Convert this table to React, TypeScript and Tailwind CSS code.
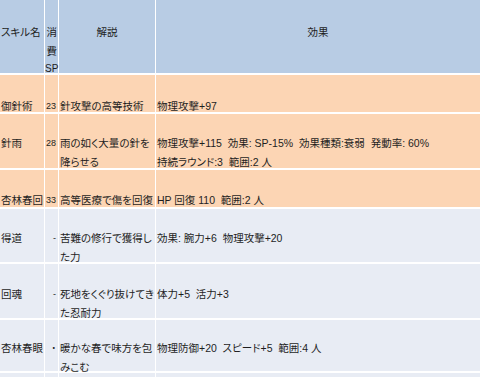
const font = { fontFamily: '"Liberation Sans", "Noto Sans CJK JP", sans-serif' };

type Row = {
  name: string;
  sp: string;
  desc: string[];
  effect: string[];
  tone: "orange" | "light";
  h: string;
  pt: string;
};

const rows: Row[] = [
  {
    name: "御針術",
    sp: "23",
    desc: ["針攻撃の高等技術"],
    effect: ["物理攻撃+97"],
    tone: "orange",
    h: "h-[37px]",
    pt: "pt-[22px]",
  },
  {
    name: "針雨",
    sp: "28",
    desc: ["雨の如く大量の針を", "降らせる"],
    effect: [
      "物理攻撃+115\u00a0\u00a0効果: SP-15%\u00a0\u00a0効果種類:衰弱\u00a0\u00a0発動率: 60%",
      "持続ラウンド:3\u00a0\u00a0範囲:2 人",
    ],
    tone: "orange",
    h: "h-[54px]",
    pt: "pt-[20px]",
  },
  {
    name: "杏林春回",
    sp: "33",
    desc: ["高等医療で傷を回復"],
    effect: ["HP 回復 110\u00a0\u00a0範囲:2 人"],
    tone: "orange",
    h: "h-[37px]",
    pt: "pt-[21px]",
  },
  {
    name: "得道",
    sp: "-",
    desc: ["苦難の修行で獲得し", "た力"],
    effect: ["効果: 腕力+6\u00a0\u00a0物理攻撃+20"],
    tone: "light",
    h: "h-[53px]",
    pt: "pt-[20px]",
  },
  {
    name: "回魂",
    sp: "-",
    desc: ["死地をくぐり抜けてき", "た忍耐力"],
    effect: ["体力+5\u00a0\u00a0活力+3"],
    tone: "light",
    h: "h-[54px]",
    pt: "pt-[21px]",
  },
  {
    name: "杏林春眼",
    sp: "・",
    desc: ["暖かな春で味方を包", "みこむ"],
    effect: ["物理防御+20\u00a0\u00a0スピード+5\u00a0\u00a0範囲:4 人"],
    tone: "light",
    h: "h-[51px]",
    pt: "pt-[19px]",
  },
];

function Cell({
  tone,
  className = "",
  children,
}: {
  tone: "orange" | "light" | "head";
  className?: string;
  children?: React.ReactNode;
}) {
  const bg =
    tone === "orange" ? "bg-[#fcd5b4]" : tone === "light" ? "bg-[#e8ecf4]" : "bg-[#b8cce4]";
  return <div className={`${bg} overflow-visible whitespace-nowrap ${className}`}>{children}</div>;
}

export default function App() {
  return (
    <div
      className="h-[377px] w-[480px] overflow-hidden bg-white text-[10.5px] leading-[19px] text-[#1e1e1e] [font-feature-settings:'palt']"
      style={font}
    >
      <div className="grid grid-cols-[44px_13px_96px_1fr] gap-x-px gap-y-[2px]">
        <Cell tone="head" className="h-[73px] pt-[23px] pl-px leading-[18px]">
          スキル名
        </Cell>
        <Cell tone="head" className="h-[73px] pt-[23px] pr-px text-right leading-[19px]">
          <div>消</div>
          <div>費</div>
          <div className="text-[10px] leading-[16px]">SP</div>
        </Cell>
        <Cell tone="head" className="h-[73px] pt-[23px] text-center leading-[18px]">
          解説
        </Cell>
        <Cell tone="head" className="h-[73px] pt-[23px] text-center leading-[18px]">
          効果
        </Cell>

        {rows.map((r) => (
          <div key={r.name} className="contents">
            <Cell tone={r.tone} className={`${r.h} ${r.pt} pl-px`}>
              {r.name}
            </Cell>
            <Cell tone={r.tone} className={`${r.h} ${r.pt} pr-[2px] text-right text-[9px]`}>
              {r.sp}
            </Cell>
            <Cell tone={r.tone} className={`${r.h} ${r.pt} pl-px`}>
              {r.desc.map((d) => (
                <div key={d}>{d}</div>
              ))}
            </Cell>
            <Cell tone={r.tone} className={`${r.h} ${r.pt} pl-px`}>
              {r.effect.map((d) => (
                <div key={d}>{d}</div>
              ))}
            </Cell>
          </div>
        ))}

        <Cell tone="light" className="h-[20px]" />
        <Cell tone="light" className="h-[20px]" />
        <Cell tone="light" className="h-[20px]" />
        <Cell tone="light" className="h-[20px]" />
      </div>
    </div>
  );
}
